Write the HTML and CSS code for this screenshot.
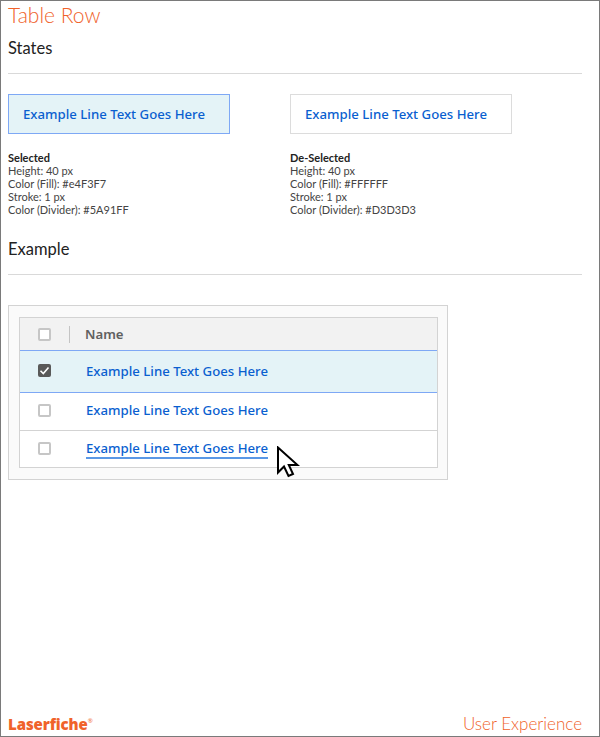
FILE: index.html
```html
<!DOCTYPE html>
<html lang="en">
<head>
<meta charset="utf-8">
<title>Table Row</title>
<link rel="stylesheet" href="styles.css">
</head>
<body>
<main class="page">
  <h1 class="title">Table Row</h1>
  <h2 class="section">States</h2>
  <div class="states">
    <div class="state">
      <div class="sample sample-selected">Example Line Text Goes Here</div>
      <div class="spec">
        <strong>Selected</strong>
        <span>Height: 40 px</span>
        <span>Color (Fill): #e4F3F7</span>
        <span>Stroke: 1 px</span>
        <span>Color (Divider): #5A91FF</span>
      </div>
    </div>
    <div class="state">
      <div class="sample">Example Line Text Goes Here</div>
      <div class="spec">
        <strong>De-Selected</strong>
        <span>Height: 40 px</span>
        <span>Color (Fill): #FFFFFF</span>
        <span>Stroke: 1 px</span>
        <span>Color (Divider): #D3D3D3</span>
      </div>
    </div>
  </div>
  <h2 class="section section-example">Example</h2>
  <div class="panel">
    <div class="table">
      <div class="row row-head">
        <span class="check"></span>
        <span class="sep"></span>
        <span class="name">Name</span>
      </div>
      <div class="row row-selected">
        <span class="check check-on">
          <svg class="tick" viewBox="0 0 13 13" width="13" height="13"><path d="M2.5 6.8 5.3 9.6 10.5 3.6" fill="none" stroke="#fff" stroke-width="1.6"/></svg>
        </span>
        <span class="link">Example Line Text Goes Here</span>
      </div>
      <div class="row row-plain">
        <span class="check"></span>
        <span class="link">Example Line Text Goes Here</span>
      </div>
      <div class="row row-last">
        <span class="check"></span>
        <span class="link link-hover">Example Line Text Goes Here</span>
        <svg class="cursor" viewBox="0 0 24 32" width="24" height="32"><path d="M2 1.5V26.5L8 20.5 12.5 30 17 28 12.8 19H21.5Z" fill="#fff" stroke="#000" stroke-width="2" stroke-linejoin="miter"/></svg>
      </div>
    </div>
  </div>
  <footer class="footer">
    <span class="logo">Laserfiche<sup class="reg">®</sup></span>
    <span class="ux">User Experience</span>
  </footer>
</main>
</body>
</html>
```
FILE: styles.css
```css
* { box-sizing: border-box; }
html, body { margin: 0; padding: 0; background: #fff; }
.page {
  width: 600px;
  height: 737px;
  border: 1px solid #7a7a7a;
  padding: 0 17px 0 7px;
  display: flex;
  flex-direction: column;
  font-family: "Lato", sans-serif;
  overflow: hidden;
}
.title {
  margin: 3px 0 0;
  font-size: 21px;
  line-height: 22px;
  font-weight: 300;
  color: #f0622a;
}
.section {
  margin: 12px 0 0;
  padding-bottom: 15px;
  border-bottom: 1px solid #d9d9d9;
  font-size: 16.5px;
  line-height: 20px;
  font-weight: 400;
  color: #222;
}
.states {
  display: flex;
  gap: 60px;
  margin-top: 20px;
}
.state { width: 222px; }
.sample {
  height: 40px;
  border: 1px solid #dcdcdc;
  padding-left: 14px;
  display: flex;
  align-items: center;
  font-family: "Noto Sans", sans-serif;
  font-size: 13.2px;
  font-weight: 500;
  color: #0a5fd0;
}
.sample-selected {
  background: #e4f3f7;
  border-color: #7ea8f5;
}
.spec {
  margin-top: 17px;
  display: flex;
  flex-direction: column;
  font-size: 11px;
  line-height: 13px;
  color: #444;
}
.spec strong { font-weight: 700; color: #222; }
.section-example { margin-top: 23px; padding-bottom: 15px; }
.panel {
  width: 440px;
  height: 175px;
  margin-top: 30px;
  padding: 11px 10px;
  background: #fafafa;
  border: 1px solid #d3d3d3;
}
.table {
  width: 419px;
  border: 1px solid #d3d3d3;
  background: #fff;
}
.row {
  position: relative;
  display: flex;
  align-items: center;
  padding-left: 18px;
  font-family: "Noto Sans", sans-serif;
  font-size: 13.2px;
}
.row-head {
  height: 33px;
  background: #f2f2f2;
  border-bottom: 1px solid #7ea8f5;
}
.row-selected {
  height: 42px;
  padding-bottom: 2px;
  background: #e4f3f7;
  border-bottom: 1px solid #7ea8f5;
}
.row-plain {
  height: 38px;
  padding-bottom: 3px;
  border-bottom: 1px solid #d3d3d3;
}
.row-last { height: 36px; padding-bottom: 1px; }
.check {
  width: 13px;
  height: 13px;
  flex: none;
  border: 2px solid #c6c6c6;
  border-radius: 2px;
  background: #fff;
}
.check-on {
  background: #595959;
  border: 0;
  display: flex;
}
.tick { flex: none; }
.sep {
  width: 1px;
  height: 17px;
  margin-left: 18px;
  background: #c4c4c4;
}
.name {
  margin-left: 15px;
  font-weight: 600;
  color: #606060;
}
.link {
  margin-left: 35px;
  font-weight: 500;
  color: #0a5fd0;
}
.link-hover {
  line-height: 17px;
  border-bottom: 2px solid #5a98e6;
  margin-top: 1px;
}
.cursor {
  position: absolute;
  left: 256px;
  top: 15px;
}
.footer {
  margin-top: auto;
  margin-bottom: 2px;
  display: flex;
  justify-content: space-between;
  align-items: baseline;
}
.logo {
  font-family: "Open Sans", sans-serif;
  font-size: 15px;
  font-weight: 800;
  letter-spacing: -0.1px;
  color: #f0622a;
}
.reg {
  font-size: 6px;
  font-weight: 400;
  vertical-align: 7px;
  line-height: 0;
}
.ux {
  font-size: 17px;
  font-weight: 300;
  color: #f0622a;
}
```
